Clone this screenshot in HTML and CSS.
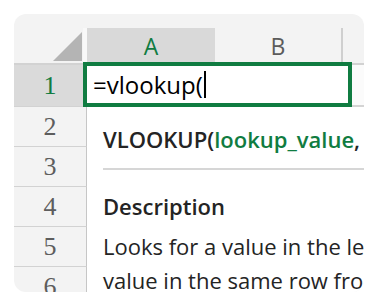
FILE: index.html
```html
<!DOCTYPE html>
<html lang="en">
<head>
    <meta charset="UTF-8">
    <meta name="viewport" content="width=device-width, initial-scale=1.0">
    <title>VLOOKUP</title>
    <link rel="stylesheet" href="styles.css">
</head>
<body>

<div class="card">
    <div class="sheet">
        <div class="corner"><span class="triangle"></span></div>
        <div class="col-head selected">A</div>
        <div class="col-head">B</div>
        <div class="col-head last"></div>

        <div class="row-head selected">1</div>
        <div class="cell"></div>
        <div class="cell"></div>
        <div class="cell"></div>

        <div class="row-head">2</div>
        <div class="cell"></div>
        <div class="cell"></div>
        <div class="cell"></div>

        <div class="row-head">3</div>
        <div class="cell"></div>
        <div class="cell"></div>
        <div class="cell"></div>

        <div class="row-head">4</div>
        <div class="cell"></div>
        <div class="cell"></div>
        <div class="cell"></div>

        <div class="row-head">5</div>
        <div class="cell"></div>
        <div class="cell"></div>
        <div class="cell"></div>

        <div class="row-head">6</div>
        <div class="cell"></div>
        <div class="cell"></div>
        <div class="cell"></div>
    </div>

    <div class="edit-box">=vlookup(<span class="caret"></span></div>

    <div class="tooltip">
        <p class="signature">VLOOKUP(<span class="arg">lookup_value</span>, [table_array], [col_index_num], [range_lookup])</p>
        <hr>
        <h3>Description</h3>
        <p class="desc">Looks for a value in the leftmost column of a table, and then returns a<br>value in the same row from a column you specify.</p>
    </div>
</div>

</body>
</html>
```

FILE: styles.css
```css
body {
    margin: 0;
    background: #ffffff;
    font-family: "Open Sans", Arial, sans-serif;
}

.card {
    position: relative;
    width: 350px;
    height: 278px;
    margin: 14px;
    padding-top: 14px;
    box-sizing: border-box;
    background: #f3f3f3;
    border-radius: 12px;
    overflow: hidden;
}

.sheet {
    display: grid;
    grid-template-columns: 73px 128px 128px 1fr;
    grid-template-rows: 37px 42px repeat(5, 40px);
}

.corner {
    position: relative;
    border-right: 4px solid #f8f8f8;
    border-bottom: 2px solid #d2d2d2;
}

.triangle {
    position: absolute;
    right: 1px;
    bottom: 2px;
    width: 0;
    height: 0;
    border-left: 29px solid transparent;
    border-bottom: 29px solid #b4b4b4;
}

.col-head {
    display: flex;
    align-items: center;
    justify-content: center;
    font-size: 23px;
    color: #5b5b5b;
    border-bottom: 2px solid #d2d2d2;
    border-right: 2px solid #cfcfcf;
}

.col-head.selected {
    background: #d9d9d9;
    color: #107c41;
    border-right: none;
}

.col-head.last {
    border-right: none;
}

.row-head {
    display: flex;
    align-items: center;
    justify-content: center;
    font-family: "Liberation Serif", "Times New Roman", serif;
    font-size: 26px;
    color: #5d5d5d;
    border-bottom: 1px solid #d2d2d2;
    border-right: 1px solid #c6c6c6;
}

.row-head.selected {
    background: #dadada;
    color: #107c41;
}

.cell {
    background: #fbfbfb;
    border-bottom: 2px solid #d4d4d4;
}

.edit-box {
    position: absolute;
    left: 69px;
    top: 48px;
    width: 255px;
    height: 37px;
    border: 4px solid #107c41;
    background: #ffffff;
    padding-left: 6px;
    font-size: 24px;
    line-height: 37px;
    color: #000;
    display: flex;
    align-items: center;
}

.caret {
    display: inline-block;
    width: 2px;
    height: 27px;
    margin-left: 1px;
    background: #000;
}

.tooltip {
    position: absolute;
    left: 73px;
    top: 93px;
    width: 900px;
    height: 200px;
    background: #ffffff;
    padding: 18px 0 0 16px;
    box-sizing: border-box;
    color: #242424;
}

.signature {
    margin: 0;
    font-size: 22px;
    font-weight: 600;
    line-height: 28px;
    white-space: nowrap;
}

.signature .arg {
    color: #107c41;
}

hr {
    margin: 15px 0 0 0;
    border: none;
    border-top: 2px solid #d6d6d6;
}

h3 {
    margin: 22px 0 0 0;
    font-size: 22px;
    font-weight: 600;
    line-height: 28px;
}

.desc {
    margin: 9px 0 0 0;
    font-size: 22px;
    line-height: 34px;
    white-space: nowrap;
}
```
